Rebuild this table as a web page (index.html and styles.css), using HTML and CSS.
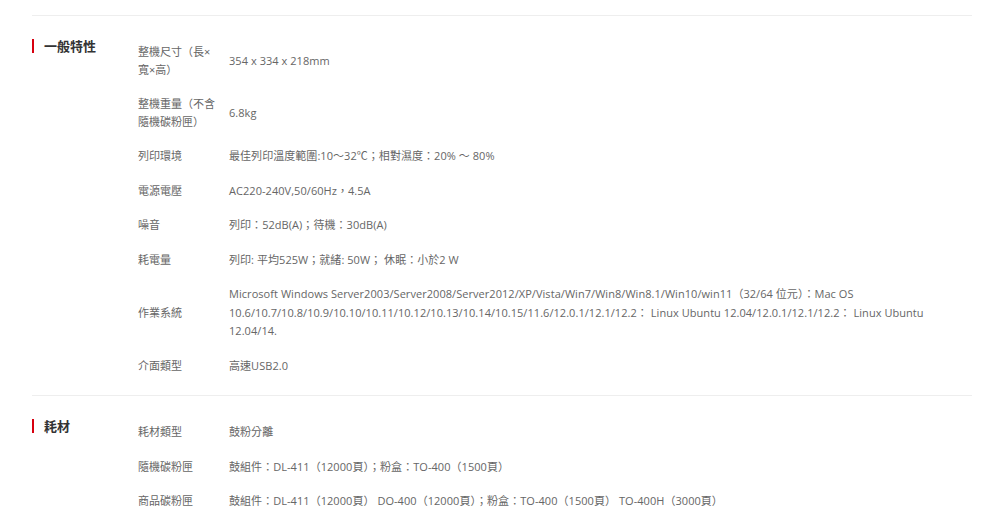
FILE: index.html
```html
<!DOCTYPE html>
<html lang="zh-Hant">
<head>
<meta charset="utf-8">
<title>規格</title>
<link rel="stylesheet" href="styles.css">
</head>
<body>
<div class="spec">
  <section class="group">
    <h3 class="group-title">一般特性</h3>
    <div class="rows">
      <div class="row"><div class="label">整機尺寸（長×寬×高）</div><div class="value">354 x 334 x 218mm</div></div>
      <div class="row"><div class="label">整機重量（不含隨機碳粉匣）</div><div class="value">6.8kg</div></div>
      <div class="row"><div class="label">列印環境</div><div class="value">最佳列印溫度範圍:10～32℃；相對濕度：20% ～ 80%</div></div>
      <div class="row"><div class="label">電源電壓</div><div class="value">AC220-240V,50/60Hz，4.5A</div></div>
      <div class="row"><div class="label">噪音</div><div class="value">列印：52dB(A)；待機：30dB(A)</div></div>
      <div class="row"><div class="label">耗電量</div><div class="value">列印: 平均525W；就緒: 50W； 休眠：小於2 W</div></div>
      <div class="row"><div class="label">作業系統</div><div class="value">Microsoft Windows Server2003/Server2008/Server2012/XP/Vista/Win7/Win8/Win8.1/Win10/win11（32/64 位元）：Mac OS 10.6/10.7/10.8/10.9/10.10/10.11/10.12/10.13/10.14/10.15/11.6/12.0.1/12.1/12.2： Linux Ubuntu 12.04/12.0.1/12.1/12.2： Linux Ubuntu 12.04/14.</div></div>
      <div class="row"><div class="label">介面類型</div><div class="value">高速USB2.0</div></div>
    </div>
  </section>
  <section class="group">
    <h3 class="group-title">耗材</h3>
    <div class="rows">
      <div class="row"><div class="label">耗材類型</div><div class="value">鼓粉分離</div></div>
      <div class="row"><div class="label">隨機碳粉匣</div><div class="value">鼓組件：DL-411（12000頁）；粉盒：TO-400（1500頁）</div></div>
      <div class="row"><div class="label">商品碳粉匣</div><div class="value">鼓組件：DL-411（12000頁） DO-400（12000頁）；粉盒：TO-400（1500頁） TO-400H（3000頁）</div></div>
    </div>
  </section>
</div>
</body>
</html>
```
FILE: styles.css
```css
html, body {
  margin: 0;
  padding: 0;
  background: #fff;
}
body {
  font-family: "Open Sans", "Noto Sans CJK SC", sans-serif;
  color: #666;
}
.spec {
  margin: 15px 28px 0 32px;
}
.group {
  display: flex;
  border-top: 1px solid #eeeeee;
  padding: 19px 0 12px;
}
.group-title {
  width: 94px;
  flex: none;
  margin: 4px 0 0;
  padding-left: 10px;
  border-left: 2px solid #d7000f;
  font-size: 13px;
  line-height: 14px;
  font-weight: bold;
  color: #333;
  align-self: flex-start;
}
.rows {
  flex: 1;
  padding-right: 30px;
}
.row {
  display: flex;
  align-items: center;
  padding: 8px 0;
  font-size: 11px;
}
.label {
  width: 80px;
  flex: none;
  margin-right: 11px;
  line-height: 18px;
}
.value {
  flex: 1;
  line-height: 18.5px;
  letter-spacing: 0.05px;
}
```
